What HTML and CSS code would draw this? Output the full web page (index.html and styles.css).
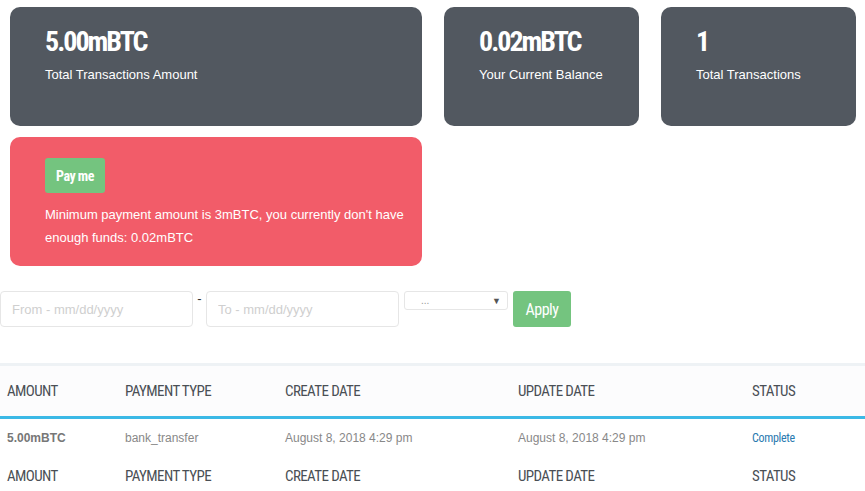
FILE: index.html
```html
<!DOCTYPE html>
<html lang="en">
<head>
    <meta charset="UTF-8">
    <meta name="viewport" content="width=device-width, initial-scale=1.0">
    <title>Affiliate Payouts</title>
    <link rel="stylesheet" href="styles.css">
</head>
<body>
    <div class="stats">
        <div class="stat-card stat-wide">
            <div class="stat-value">5.00mBTC</div>
            <div class="stat-label">Total Transactions Amount</div>
        </div>
        <div class="stat-card">
            <div class="stat-value">0.02mBTC</div>
            <div class="stat-label">Your Current Balance</div>
        </div>
        <div class="stat-card">
            <div class="stat-value">1</div>
            <div class="stat-label">Total Transactions</div>
        </div>

        <div class="payout-card stat-wide">
            <button class="btn btn-green pay-btn">Pay me</button>
            <p class="payout-msg">
                Minimum payment amount is 3mBTC, you currently don't have enough funds: 0.02mBTC
            </p>
        </div>
    </div>

    <form class="filters">
        <input class="date-input" type="text" placeholder="From - mm/dd/yyyy">
        <span class="date-sep">-</span>
        <input class="date-input" type="text" placeholder="To - mm/dd/yyyy">
        <div class="select-box">
            <span class="select-text">...</span>
            <span class="select-arrow">&#9660;</span>
        </div>
        <button class="btn btn-green apply-btn" type="button">Apply</button>
    </form>

    <table class="tx-table">
        <colgroup>
            <col style="width: 118px">
            <col style="width: 160px">
            <col style="width: 233px">
            <col style="width: 234px">
            <col>
        </colgroup>
        <thead>
            <tr>
                <th>Amount</th>
                <th>Payment Type</th>
                <th>Create Date</th>
                <th>Update Date</th>
                <th>Status</th>
            </tr>
        </thead>
        <tbody>
            <tr>
                <td class="tx-amount">5.00mBTC</td>
                <td>bank_transfer</td>
                <td>August 8, 2018 4:29 pm</td>
                <td>August 8, 2018 4:29 pm</td>
                <td><a class="tx-status" href="#">Complete</a></td>
            </tr>
        </tbody>
        <tfoot>
            <tr>
                <th>Amount</th>
                <th>Payment Type</th>
                <th>Create Date</th>
                <th>Update Date</th>
                <th>Status</th>
            </tr>
        </tfoot>
    </table>
</body>
</html>
```

FILE: styles.css
```css
* {
    margin: 0;
    padding: 0;
    box-sizing: border-box;
}

body {
    font-family: 'Liberation Sans', Arial, sans-serif;
    font-size: 13px;
    color: #777;
    background: #fff;
    overflow: hidden;
}

/* Titres condensés (à la Oswald) */
.stat-value,
.btn,
.tx-table th,
.tx-status {
    font-family: 'Roboto Condensed', 'DejaVu Sans Condensed', 'DejaVu Sans', sans-serif;
    font-stretch: condensed;
}

.stats {
    display: grid;
    grid-template-columns: repeat(4, minmax(0, 1fr));
    column-gap: 22px;
    row-gap: 11px;
    padding: 7px 9px 0 10px;
}

.stat-wide {
    grid-column: span 2;
}

.stat-card {
    background: #525860;
    border-radius: 10px;
    height: 119px;
    padding: 20px 35px 0 35px;
    color: #fff;
}

.stat-value {
    font-size: 28px;
    font-weight: bold;
    line-height: 30px;
    letter-spacing: -2px;
}

.stat-label {
    font-size: 13px;
    margin-top: 10px;
}

.payout-card {
    grid-column: 1 / span 2;
    background: #f25c69;
    border-radius: 10px;
    height: 129px;
    padding: 21px 10px 0 35px;
    color: #fff;
}

.btn {
    border: none;
    border-radius: 3px;
    color: #fff;
    cursor: pointer;
}

.btn-green {
    background: #74c47f;
}

.pay-btn {
    width: 60px;
    height: 35px;
    font-size: 14px;
    font-weight: bold;
    letter-spacing: -0.5px;
}

.payout-msg {
    margin-top: 10px;
    font-size: 13px;
    line-height: 23px;
}

.filters {
    display: flex;
    align-items: flex-start;
    margin-top: 25px;
}

.date-input {
    width: 193px;
    height: 36px;
    border: 1px solid #e6e6e6;
    border-radius: 4px;
    padding: 0 11px;
    font-family: inherit;
    font-size: 13px;
    color: #555;
}

.date-input::placeholder {
    color: #cfcfcf;
}

.date-sep {
    width: 13px;
    text-align: center;
    color: #333;
    line-height: 16px;
}

.select-box {
    width: 104px;
    height: 19px;
    margin-left: 5px;
    border: 1px solid #e6e6e6;
    border-radius: 3px;
    display: flex;
    align-items: center;
    justify-content: space-between;
    padding: 0 6px 0 16px;
    font-size: 10px;
    color: #999;
}

.select-arrow {
    font-size: 9px;
    color: #555;
}

.apply-btn {
    margin-left: 5px;
    width: 58px;
    height: 36px;
    font-size: 16px;
    letter-spacing: -0.5px;
}

.tx-table {
    margin-top: 36px;
    width: 100%;
    table-layout: fixed;
    border-collapse: collapse;
    border-top: 3px solid #eef2f5;
}

.tx-table th {
    text-align: left;
    font-weight: normal;
    text-transform: uppercase;
    font-size: 15px;
    letter-spacing: -0.6px;
    color: #4a4f55;
    padding-left: 7px;
}

.tx-table thead tr {
    background: #fcfcfd;
    height: 53px;
    border-bottom: 3px solid #3bb9e6;
}

.tx-table td {
    padding-left: 7px;
    height: 40px;
    font-size: 12px;
    color: #888;
}

.tx-table td.tx-amount {
    font-weight: bold;
    color: #777;
}

.tx-table tfoot tr {
    height: 36px;
}

.tx-status {
    color: #2a7ab0;
    text-decoration: none;
    font-size: 12px;
    letter-spacing: -0.3px;
}
```
